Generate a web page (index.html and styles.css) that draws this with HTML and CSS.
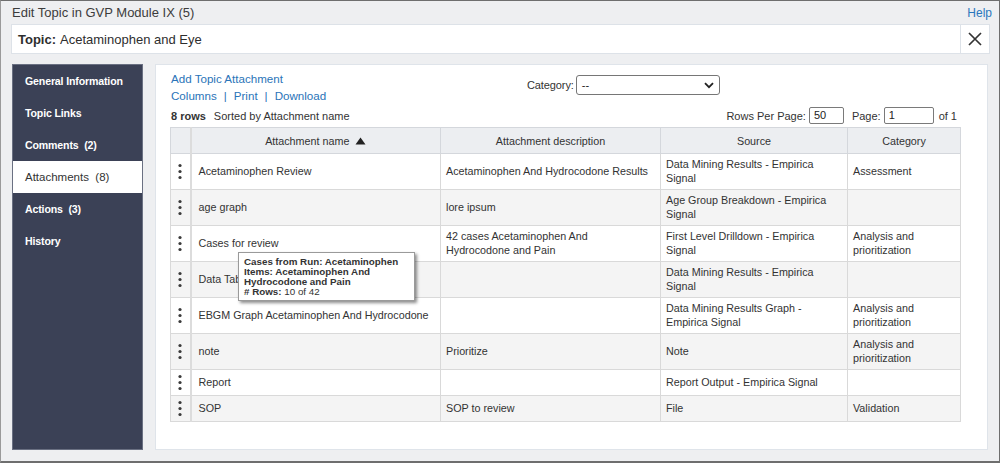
FILE: index.html
```html
<!DOCTYPE html>
<html>
<head>
<meta charset="utf-8">
<link rel="stylesheet" href="styles.css">
</head>
<body>
<div class="frame">
  <div class="titlebar">
    <span class="title">Edit Topic in GVP Module IX (5)</span>
    <a class="help">Help</a>
  </div>
  <div class="topicbar">
    <div class="topic"><b>Topic:</b> Acetaminophen and Eye</div>
    <div class="close">
      <svg width="16" height="16" viewBox="0 0 16 16"><path d="M2 2 L14 14 M14 2 L2 14" stroke="#333" stroke-width="1.7" fill="none"/></svg>
    </div>
  </div>
  <div class="body">
    <nav class="sidebar">
      <div class="nav-item">General Information</div>
      <div class="nav-item">Topic Links</div>
      <div class="nav-item">Comments&nbsp; (2)</div>
      <div class="nav-item active">Attachments&nbsp; (8)</div>
      <div class="nav-item">Actions&nbsp; (3)</div>
      <div class="nav-item">History</div>
    </nav>
    <main class="panel">
      <div class="toolbar-top">
        <div class="links">
          <div class="link-line"><a>Add Topic Attachment</a></div>
          <div class="link-line"><a>Columns</a><span class="sep">|</span><a>Print</a><span class="sep">|</span><a>Download</a></div>
        </div>
        <div class="category">
          <span class="cat-label">Category:</span>
          <div class="select"><span>--</span>
            <svg width="10" height="7" viewBox="0 0 10 7"><path d="M1 1.2 L5 5.2 L9 1.2" stroke="#222" stroke-width="1.8" fill="none"/></svg>
          </div>
        </div>
      </div>
      <div class="toolbar-2">
        <div class="count"><b>8 rows</b><span class="sorted">Sorted by Attachment name</span></div>
        <div class="paging">
          <span>Rows Per Page:</span><span class="input w35">50</span>
          <span class="page-label">Page:</span><span class="input w50">1</span>
          <span class="of">of 1</span>
        </div>
      </div>
      <table class="grid">
        <colgroup>
          <col class="c-menu"><col class="c-name"><col class="c-desc"><col class="c-src"><col class="c-cat">
        </colgroup>
        <thead>
          <tr>
            <th class="menu"></th>
            <th>Attachment name <svg class="sort" width="11" height="8" viewBox="0 0 11 8"><path d="M0.5 7.5 L5.5 0.5 L10.5 7.5 Z" fill="#222"/></svg></th>
            <th>Attachment description</th>
            <th>Source</th>
            <th>Category</th>
          </tr>
        </thead>
        <tbody>
          <tr>
            <td class="menu"><svg class="kebab" width="6" height="17" viewBox="0 0 6 17"><circle cx="3" cy="2.5" r="1.6"/><circle cx="3" cy="8.5" r="1.6"/><circle cx="3" cy="14.5" r="1.6"/></svg></td>
            <td class="name">Acetaminophen Review</td>
            <td>Acetaminophen And Hydrocodone Results</td>
            <td>Data Mining Results - Empirica Signal</td>
            <td>Assessment</td>
          </tr>
          <tr>
            <td class="menu"><svg class="kebab" width="6" height="17" viewBox="0 0 6 17"><circle cx="3" cy="2.5" r="1.6"/><circle cx="3" cy="8.5" r="1.6"/><circle cx="3" cy="14.5" r="1.6"/></svg></td>
            <td class="name">age graph</td>
            <td>lore ipsum</td>
            <td>Age Group Breakdown - Empirica Signal</td>
            <td></td>
          </tr>
          <tr>
            <td class="menu"><svg class="kebab" width="6" height="17" viewBox="0 0 6 17"><circle cx="3" cy="2.5" r="1.6"/><circle cx="3" cy="8.5" r="1.6"/><circle cx="3" cy="14.5" r="1.6"/></svg></td>
            <td class="name">Cases for review</td>
            <td>42 cases Acetaminophen And Hydrocodone and Pain</td>
            <td>First Level Drilldown - Empirica Signal</td>
            <td>Analysis and prioritization</td>
          </tr>
          <tr>
            <td class="menu"><svg class="kebab" width="6" height="17" viewBox="0 0 6 17"><circle cx="3" cy="2.5" r="1.6"/><circle cx="3" cy="8.5" r="1.6"/><circle cx="3" cy="14.5" r="1.6"/></svg></td>
            <td class="name">Data Table</td>
            <td></td>
            <td>Data Mining Results - Empirica Signal</td>
            <td></td>
          </tr>
          <tr>
            <td class="menu"><svg class="kebab" width="6" height="17" viewBox="0 0 6 17"><circle cx="3" cy="2.5" r="1.6"/><circle cx="3" cy="8.5" r="1.6"/><circle cx="3" cy="14.5" r="1.6"/></svg></td>
            <td class="name">EBGM Graph Acetaminophen And Hydrocodone</td>
            <td></td>
            <td>Data Mining Results Graph - Empirica Signal</td>
            <td>Analysis and prioritization</td>
          </tr>
          <tr>
            <td class="menu"><svg class="kebab" width="6" height="17" viewBox="0 0 6 17"><circle cx="3" cy="2.5" r="1.6"/><circle cx="3" cy="8.5" r="1.6"/><circle cx="3" cy="14.5" r="1.6"/></svg></td>
            <td class="name">note</td>
            <td>Prioritize</td>
            <td>Note</td>
            <td>Analysis and prioritization</td>
          </tr>
          <tr>
            <td class="menu"><svg class="kebab" width="6" height="17" viewBox="0 0 6 17"><circle cx="3" cy="2.5" r="1.6"/><circle cx="3" cy="8.5" r="1.6"/><circle cx="3" cy="14.5" r="1.6"/></svg></td>
            <td class="name">Report</td>
            <td></td>
            <td>Report Output - Empirica Signal</td>
            <td></td>
          </tr>
          <tr>
            <td class="menu"><svg class="kebab" width="6" height="17" viewBox="0 0 6 17"><circle cx="3" cy="2.5" r="1.6"/><circle cx="3" cy="8.5" r="1.6"/><circle cx="3" cy="14.5" r="1.6"/></svg></td>
            <td class="name">SOP</td>
            <td>SOP to review</td>
            <td>File</td>
            <td>Validation</td>
          </tr>
        </tbody>
      </table>
      <div class="tooltip">
        <div>Cases from Run: Acetaminophen</div>
        <div>Items: Acetaminophen And</div>
        <div>Hydrocodone and Pain</div>
        <div># Rows: <span class="reg">10 of 42</span></div>
      </div>
    </main>
  </div>
</div>
</body>
</html>
```
FILE: styles.css
```css
* { box-sizing: border-box; }
html, body { margin: 0; padding: 0; }
body {
  font-family: "Liberation Sans", Arial, sans-serif;
  color: #333;
}
.frame {
  width: 1000px;
  height: 463px;
  background: #eeeff1;
  border: 1px solid #6e6e6e;
  border-left-color: #9a9a9a;
  border-bottom-width: 2px;
  display: flex;
  flex-direction: column;
  overflow: hidden;
}
.titlebar {
  height: 23px;
  flex: none;
  display: flex;
  align-items: center;
  justify-content: space-between;
  padding: 0 7px 0 11px;
}
.title { font-size: 13px; color: #3c3c3c; }
.help { font-size: 12px; color: #2b78bd; }
.topicbar {
  height: 30px;
  flex: none;
  margin: 0 9px 0 10px;
  background: #fff;
  border: 1px solid #dde2e8;
  display: flex;
  align-items: stretch;
}
.topic {
  flex: 1;
  display: flex;
  align-items: center;
  padding-left: 6px;
  font-size: 13px;
  color: #2e2e2e;
}
.topic b { margin-right: 4px; }
.close {
  width: 29px;
  border-left: 1px solid #dde2e8;
  display: flex;
  align-items: center;
  justify-content: center;
}
.body {
  flex: none;
  height: 386px;
  margin-top: 10px;
  padding: 0 11px 0 11px;
  display: flex;
  gap: 12px;
}
.sidebar {
  width: 131px;
  flex: none;
  background: #3b4156;
  border: 1px solid #6a7082;
  padding: 0;
}
.nav-item {
  height: 32px;
  display: flex;
  align-items: center;
  padding-left: 12px;
  color: #fff;
  font-size: 10.6px;
  font-weight: bold;
  letter-spacing: -0.15px;
}
.nav-item.active {
  background: #fff;
  color: #333;
  font-weight: normal;
  font-size: 11.5px;
  letter-spacing: 0;
}
.panel {
  flex: 1;
  background: #fff;
  border: 1px solid #dfe4ea;
  position: relative;
  padding: 5px 14px 0 14px;
}
.toolbar-top {
  display: flex;
  align-items: flex-start;
}
.links {
  width: 357px;
  flex: none;
  padding-left: 1px;
}
.link-line {
  height: 17px;
  line-height: 17px;
  font-size: 11.6px;
  color: #2a74b8;
}
.link-line a { color: #2a74b8; }
.sep { margin: 0 7px; color: #2a74b8; }
.category {
  display: flex;
  align-items: center;
  margin-top: 5px;
  font-size: 11px;
  color: #333;
}
.cat-label { margin-right: 2px; letter-spacing: -0.1px; }
.select {
  width: 144px;
  height: 20px;
  border: 1px solid #767676;
  border-radius: 3px;
  display: flex;
  align-items: center;
  justify-content: space-between;
  padding: 0 5px 0 5px;
  font-size: 11px;
  color: #222;
}
.toolbar-2 {
  width: 790px;
  height: 23px;
  display: flex;
  align-items: center;
  justify-content: space-between;
  font-size: 11px;
  padding: 0 3px 0 1px;
}
.count b { font-weight: bold; }
.sorted { margin-left: 8px; }
.paging { display: flex; align-items: center; }
.input {
  height: 17px;
  border: 1px solid #7a7a7a;
  border-radius: 2px;
  padding: 0 4px;
  line-height: 15px;
  margin-left: 3px;
  color: #222;
}
.w35 { width: 35px; }
.w50 { width: 50px; }
.page-label { margin-left: 8px; }
.of { margin-left: 5px; }
.grid {
  width: 790px;
  border-collapse: collapse;
  table-layout: fixed;
  font-size: 10.75px;
  color: #333;
}
.c-menu { width: 20px; }
.c-name { width: 250px; }
.c-desc { width: 220px; }
.c-src { width: 187px; }
.c-cat { width: 113px; }
.grid th {
  background: #eceef1;
  border: 1px solid #d4d7dc;
  height: 26px;
  font-weight: normal;
  font-size: 10.75px;
  text-align: center;
  padding: 0 4px;
  color: #333;
}
.sort { vertical-align: 0px; margin-left: 3px; }
.grid td {
  border: 1px solid #d9d9d9;
  padding: 4px 6px 4px 5px;
  line-height: 13.5px;
  vertical-align: middle;
  text-align: left;
}
.grid .menu {
  border-right: 2px solid #dcdcdc;
  padding: 4px 0;
  text-align: center;
}
.grid td.name { padding-left: 7px; }
.grid tbody tr:nth-child(even) td { background: #f4f4f4; }
.kebab { display: block; margin: 0 auto; fill: #3a3a3a; }
.tooltip {
  position: absolute;
  left: 82px;
  top: 187px;
  width: 177px;
  height: 49px;
  background: #fff;
  border: 1px solid #9a9a9a;
  box-shadow: 2px 2px 3px rgba(0,0,0,0.45);
  padding: 4px 5px;
  font-size: 9.8px;
  font-weight: bold;
  line-height: 10px;
  color: #333;
}
.tooltip .reg { font-weight: normal; }
```
